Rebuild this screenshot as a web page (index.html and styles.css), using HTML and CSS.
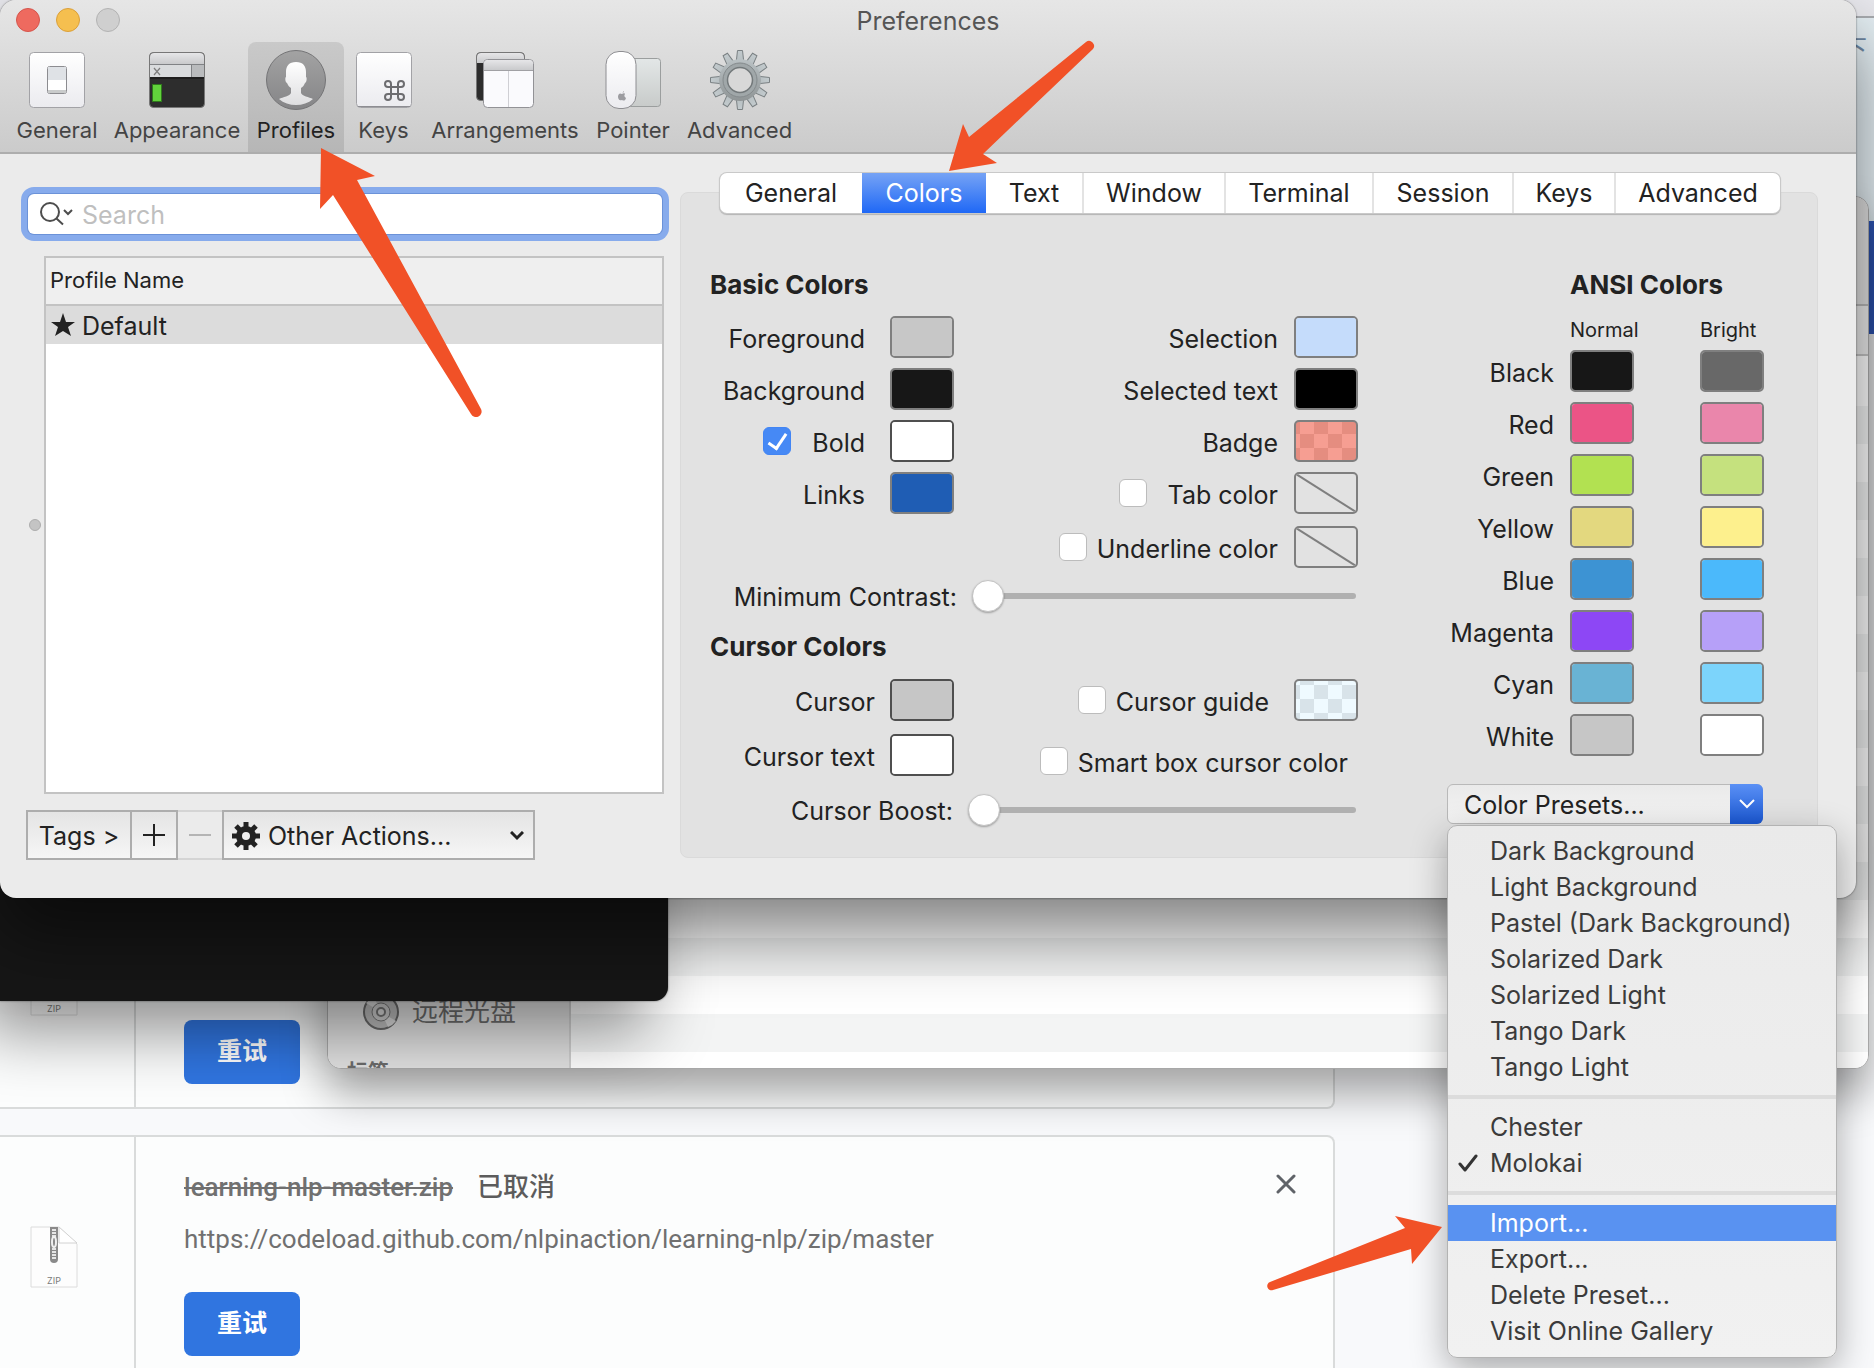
FILE: index.html
```html
<!DOCTYPE html>
<html lang="en">
<head>
<meta charset="utf-8">
<title>Preferences</title>
<link rel="stylesheet" href="styles.css">
</head>
<body>
<div class="desktop">

  <main class="browser" lang="zh-CN">
    <div class="browser-strip"></div>
    <div class="browser-header"><span class="header-link">下</span></div>
    <div class="browser-banner"></div>
    <div class="downloads">
      <article class="download">
        <div class="download-icon">
          <svg class="zip" viewBox="0 0 48 63" aria-hidden="true"><use href="#zip-file"/></svg>
        </div>
        <div class="download-body">
          <p class="download-name"><s>learning-nlp-master.zip</s> <span>已取消</span></p>
          <a class="download-url" href="#">https://codeload.github.com/nlpinaction/learning-nlp/zip/master</a>
          <button class="retry" type="button">重试</button>
        </div>
      </article>
      <article class="download">
        <div class="download-icon">
          <svg class="zip" viewBox="0 0 48 63" aria-hidden="true"><use href="#zip-file"/></svg>
        </div>
        <div class="download-body">
          <p class="download-name"><s>learning-nlp-master.zip</s> <span>已取消</span></p>
          <a class="download-url" href="#">https://codeload.github.com/nlpinaction/learning-nlp/zip/master</a>
          <button class="retry" type="button">重试</button>
        </div>
        <button class="close" type="button" aria-label="Remove">
          <svg viewBox="0 0 20 20" width="20" height="20"><path d="M2 2l16 16M18 2L2 18" stroke="#5f6368" stroke-width="3" stroke-linecap="round"/></svg>
        </button>
      </article>
    </div>
  </main>

  <section class="finder" aria-label="Finder" lang="zh-CN">
    <div class="finder-toolbar"></div>
    <div class="finder-path"></div>
    <div class="finder-main">
      <div class="finder-side">
        <div class="finder-place">
          <svg viewBox="0 0 38 38" width="38" height="38" aria-hidden="true">
            <circle cx="19" cy="19" r="17" fill="#bdbdbd" stroke="#6a6a6a" stroke-width="2"/>
            <path d="M19 19L4 10A17 17 0 0 1 12 4ZM19 19l15 9a17 17 0 0 1-8 6Z" fill="#dcdcdc"/>
            <circle cx="19" cy="19" r="9" fill="#cfcfcf" stroke="#777" stroke-width="1"/>
            <circle cx="19" cy="19" r="4" fill="#ddd" stroke="#777" stroke-width="2"/>
          </svg>
          <span>远程光盘</span>
        </div>
        <div class="finder-group">标签</div>
      </div>
      <div class="finder-list"></div>
    </div>
  </section>

  <section class="terminal" aria-label="Terminal"></section>

  <section class="prefs" aria-labelledby="prefs-title">
    <header class="prefs-head">
      <div class="titlebar">
        <div class="lights">
          <button class="light light-close" type="button" aria-label="Close"></button>
          <button class="light light-min" type="button" aria-label="Minimize"></button>
          <button class="light light-zoom" type="button" aria-label="Zoom" disabled></button>
        </div>
        <h1 class="prefs-title" id="prefs-title">Preferences</h1>
      </div>
      <nav class="toolbar">
        <button class="tool" type="button">
          <svg viewBox="0 0 60 60" aria-hidden="true">
            <rect x="2.500" y="2.500" width="55" height="55" rx="4" fill="url(#tile)" stroke="#a2a2a6"/>
            <rect x="20.500" y="16.500" width="19" height="27" rx="2" fill="#fff" stroke="#8c8c90"/>
            <rect x="21" y="17" width="18" height="13" fill="#dfe2e6"/>
            <rect x="21" y="40" width="18" height="3" fill="#c9cbcb"/>
          </svg>
          <span>General</span>
        </button>
        <button class="tool" type="button">
          <svg viewBox="0 0 60 60" aria-hidden="true">
            <rect x="2.500" y="2.500" width="55" height="55" rx="4" fill="#2d2d2d" stroke="#777"/>
            <path d="M3 14V7q0-4 4-4h46q4 0 4 4v7Z" fill="url(#bar)"/>
            <rect x="3" y="15" width="41" height="12" fill="#d9dbdd"/>
            <rect x="45" y="15" width="12" height="12" fill="#b9bbbd"/>
            <path d="M3 14.500h54M44.500 14v13" stroke="#808285"/>
            <path d="M3 28h54" stroke="#111"/>
            <path d="M7 18l6 7M13 18l-6 7" stroke="#7d7d7d" stroke-width="1.200"/>
            <rect x="5" y="34" width="10" height="18" fill="#2f7a1c"/>
            <rect x="6" y="35" width="8" height="16" fill="#62d23c"/>
          </svg>
          <span>Appearance</span>
        </button>
        <button class="tool tool-on" type="button" aria-current="page">
          <svg viewBox="0 0 60 60" aria-hidden="true">
            <circle cx="30" cy="30" r="29.500" fill="url(#disc)" stroke="#747476"/>
            <path d="M30 12c7 0 10 4 10 10v5c1 0 1 5-1 6-1 2-2 4-4 5v5c1 3 8 4 12 6-9 8-25 8-34 0 4-2 11-3 12-6v-5c-2-1-3-3-4-5-2-1-2-6-1-6v-5c0-6 3-10 10-10Z" fill="url(#person)"/>
          </svg>
          <span>Profiles</span>
        </button>
        <button class="tool" type="button">
          <svg viewBox="0 0 60 60" aria-hidden="true">
            <rect x="2.500" y="2.500" width="55" height="55" rx="4" fill="url(#tile)" stroke="#a2a2a6"/>
            <path d="M4 56.500h52" stroke="#8d8d92"/>
            <path d="M37 37h7v7h-7ZM37 37v-3a3 3 0 1 0-3 3ZM44 37h3a3 3 0 1 0-3-3ZM44 44v3a3 3 0 1 0 3-3ZM37 44h-3a3 3 0 1 0 3 3Z" fill="none" stroke="#6d6d70" stroke-width="2"/>
          </svg>
          <span>Keys</span>
        </button>
        <button class="tool" type="button">
          <svg viewBox="0 0 60 60" aria-hidden="true">
            <rect x="1.500" y="2.500" width="48" height="48" rx="4" fill="#2d2d2d" stroke="#777"/>
            <path d="M2 13V7q0-4 4-4h39q4 0 4 4v6Z" fill="url(#bar)"/>
            <rect x="8.500" y="9.500" width="50" height="48" rx="4" fill="#fafafd" stroke="#929296"/>
            <path d="M9 20v-6q0-4 4-4h41q4 0 4 4v6Z" fill="url(#bar)"/>
            <path d="M9 20.500h49" stroke="#a0a0a4"/>
            <path d="M33.500 21v36" stroke="#cfcfd4"/>
          </svg>
          <span>Arrangements</span>
        </button>
        <button class="tool" type="button">
          <svg viewBox="0 0 60 60" aria-hidden="true">
            <rect x="20.500" y="8.500" width="37" height="48" rx="3" fill="url(#pad)" stroke="#9b9e9e"/>
            <rect x="3" y="1.500" width="30" height="57" rx="13" fill="url(#tile)" stroke="#8e8e92"/>
            <path d="M19 43c1 0 1-2 2-2 0 1-1 2-2 2Zm0 1c1-1 3-1 3 0-1 1-1 3 1 4-1 3-2 3-4 2-3 1-4-1-4-4 1-3 2-3 4-2Z" fill="#9c9ca0"/>
          </svg>
          <span>Pointer</span>
        </button>
        <button class="tool" type="button">
          <svg viewBox="0 0 60 60" aria-hidden="true">
            <g fill="url(#steel)" stroke="#7a8083">
              <path d="M26 14L27.500 .500h5L34 14Z"/>
              <path d="M26 14L27.500 .500h5L34 14Z" transform="rotate(30 30 30)"/>
              <path d="M26 14L27.500 .500h5L34 14Z" transform="rotate(60 30 30)"/>
              <path d="M26 14L27.500 .500h5L34 14Z" transform="rotate(90 30 30)"/>
              <path d="M26 14L27.500 .500h5L34 14Z" transform="rotate(120 30 30)"/>
              <path d="M26 14L27.500 .500h5L34 14Z" transform="rotate(150 30 30)"/>
              <path d="M26 14L27.500 .500h5L34 14Z" transform="rotate(180 30 30)"/>
              <path d="M26 14L27.500 .500h5L34 14Z" transform="rotate(210 30 30)"/>
              <path d="M26 14L27.500 .500h5L34 14Z" transform="rotate(240 30 30)"/>
              <path d="M26 14L27.500 .500h5L34 14Z" transform="rotate(270 30 30)"/>
              <path d="M26 14L27.500 .500h5L34 14Z" transform="rotate(300 30 30)"/>
              <path d="M26 14L27.500 .500h5L34 14Z" transform="rotate(330 30 30)"/>
            </g>
            <circle cx="30" cy="30" r="21" fill="url(#steel)"/>
            <circle cx="30" cy="30" r="17" fill="#a0a7a9" stroke="#848a8c"/>
            <circle cx="30" cy="30" r="12.500" fill="#d8d8d8" stroke="#73797b" stroke-width="1.500"/>
          </svg>
          <span>Advanced</span>
        </button>
      </nav>
    </header>

    <div class="prefs-body">
      <aside class="profiles">
        <label class="search">
          <svg viewBox="0 0 34 24" width="34" height="24" aria-hidden="true">
            <circle cx="11" cy="10" r="9" fill="none" stroke="#4d4d4d" stroke-width="2"/>
            <path d="M17.500 16.500L24 22.500M25 8l4 4 4-4" fill="none" stroke="#4d4d4d" stroke-width="2"/>
          </svg>
          <input type="search" placeholder="Search" aria-label="Search profiles">
        </label>
        <div class="profile-area">
          <span class="grip"></span>
          <div class="profile-list">
            <table>
              <thead><tr><th scope="col">Profile Name</th></tr></thead>
              <tbody><tr><td>
                <svg viewBox="0 0 24 24" width="24" height="24" aria-hidden="true"><path d="M12 0l3 9h9l-7 5 3 9-8-5-8 5 3-9-7-5h9Z" fill="#222"/></svg>Default
              </td></tr></tbody>
            </table>
          </div>
        </div>
        <div class="profile-actions">
          <button class="act act-tags" type="button">Tags &gt;</button>
          <button class="act act-add" type="button" aria-label="Add profile"><svg viewBox="0 0 22 22" width="22" height="22"><path d="M11 0v22M0 11h22" stroke="#222" stroke-width="2"/></svg></button>
          <button class="act act-remove" type="button" aria-label="Remove profile" disabled><svg viewBox="0 0 22 22" width="22" height="22"><path d="M0 11h22" stroke="#b4b4b4" stroke-width="2"/></svg></button>
          <div class="act-other">
            <svg class="gear" viewBox="0 0 28 28" width="28" height="28" aria-hidden="true">
              <path d="M14 0v28M0 14h28M4 4l20 20M24 4L4 24" stroke="#222" stroke-width="5"/>
              <circle cx="14" cy="14" r="7" fill="none" stroke="#222" stroke-width="6"/>
              <circle cx="14" cy="14" r="4" fill="#eee"/>
            </svg>
            <select aria-label="Other actions"><option>Other Actions...</option></select>
            <svg class="chevron" viewBox="0 0 14 10" width="14" height="10" aria-hidden="true"><path d="M1 1l6 6 6-6" fill="none" stroke="#222" stroke-width="3"/></svg>
          </div>
        </div>
      </aside>

      <div class="pane">
        <div class="tabs" role="tablist">
          <button type="button" role="tab">General</button>
          <button type="button" role="tab" class="tab-on" aria-selected="true">Colors</button>
          <button type="button" role="tab">Text</button>
          <button type="button" role="tab">Window</button>
          <button type="button" role="tab">Terminal</button>
          <button type="button" role="tab">Session</button>
          <button type="button" role="tab">Keys</button>
          <button type="button" role="tab">Advanced</button>
        </div>

        <div class="panel">
          <div class="colors">
            <h2>Basic Colors</h2>
            <div class="basic">
              <div class="stack">
                <div class="field"><label for="fg">Foreground</label><input class="well" type="color" id="fg" value="#c7c7c7"></div>
                <div class="field"><label for="bg">Background</label><input class="well" type="color" id="bg" value="#171717"></div>
                <div class="field"><input class="tick tick-apart" type="checkbox" id="bold-on" checked aria-label="Use bold color"><label for="bold">Bold</label><input class="well well-dark" type="color" id="bold" value="#ffffff"></div>
                <div class="field"><label for="links">Links</label><input class="well" type="color" id="links" value="#1f5db4"></div>
              </div>
              <div class="stack stack-right">
                <div class="field"><label for="sel">Selection</label><input class="well" type="color" id="sel" value="#c5dcfb"></div>
                <div class="field"><label for="seltext">Selected text</label><input class="well" type="color" id="seltext" value="#000000"></div>
                <div class="field"><label for="badge">Badge</label><button class="well well-badge" type="button" id="badge"></button></div>
                <div class="field"><input class="tick tick-apart" type="checkbox" id="tab-on"><label for="tab-on">Tab color</label><button class="well well-none" type="button" aria-label="Tab color well"><svg viewBox="0 0 60 38" preserveAspectRatio="none"><path d="M0 0l60 38" stroke="#7f7f7f" stroke-width="2"/></svg></button></div>
                <div class="field field-tall"><input class="tick" type="checkbox" id="under-on"><label for="under-on">Underline color</label><button class="well well-none" type="button" aria-label="Underline color well"><svg viewBox="0 0 60 38" preserveAspectRatio="none"><path d="M0 0l60 38" stroke="#7f7f7f" stroke-width="2"/></svg></button></div>
              </div>
            </div>
            <div class="slide"><label for="contrast">Minimum Contrast:</label><input type="range" id="contrast" min="0" max="100" value="0"></div>

            <h2>Cursor Colors</h2>
            <div class="cursor-row">
              <div class="field field-near"><label for="cur">Cursor</label><input class="well well-dark" type="color" id="cur" value="#c6c6c6"></div>
              <div class="field"><input class="tick" type="checkbox" id="guide-on"><label for="guide-on">Cursor guide</label><button class="well well-guide" type="button" aria-label="Cursor guide color"></button></div>
            </div>
            <div class="cursor-row">
              <div class="field field-near"><label for="curtext">Cursor text</label><input class="well well-dark" type="color" id="curtext" value="#ffffff"></div>
              <div class="field field-smart"><input class="tick" type="checkbox" id="smart"><label for="smart">Smart box cursor color</label></div>
            </div>
            <div class="slide slide-boost"><label for="boost">Cursor Boost:</label><input type="range" id="boost" min="0" max="100" value="0"></div>
          </div>

          <div class="ansi">
            <table class="ansi-table">
              <thead>
                <tr><td></td><th colspan="2" class="ansi-title" scope="colgroup">ANSI Colors</th></tr>
                <tr class="ansi-heads"><td></td><th scope="col">Normal</th><th scope="col">Bright</th></tr>
              </thead>
              <tbody>
                <tr><th scope="row">Black</th><td><input class="well" type="color" aria-label="Black normal" value="#171717"></td><td><input class="well" type="color" aria-label="Black bright" value="#686868"></td></tr>
                <tr><th scope="row">Red</th><td><input class="well" type="color" aria-label="Red normal" value="#eb5486"></td><td><input class="well" type="color" aria-label="Red bright" value="#ea86ab"></td></tr>
                <tr><th scope="row">Green</th><td><input class="well" type="color" aria-label="Green normal" value="#b2e151"></td><td><input class="well" type="color" aria-label="Green bright" value="#c5e17e"></td></tr>
                <tr><th scope="row">Yellow</th><td><input class="well" type="color" aria-label="Yellow normal" value="#e3d87f"></td><td><input class="well" type="color" aria-label="Yellow bright" value="#fdf08d"></td></tr>
                <tr><th scope="row">Blue</th><td><input class="well" type="color" aria-label="Blue normal" value="#3d93d3"></td><td><input class="well" type="color" aria-label="Blue bright" value="#4bb9fb"></td></tr>
                <tr><th scope="row">Magenta</th><td><input class="well" type="color" aria-label="Magenta normal" value="#8d47f5"></td><td><input class="well" type="color" aria-label="Magenta bright" value="#b6a0f8"></td></tr>
                <tr><th scope="row">Cyan</th><td><input class="well" type="color" aria-label="Cyan normal" value="#69b3d4"></td><td><input class="well" type="color" aria-label="Cyan bright" value="#7cd4fb"></td></tr>
                <tr><th scope="row">White</th><td><input class="well" type="color" aria-label="White normal" value="#c6c6c6"></td><td><input class="well" type="color" aria-label="White bright" value="#ffffff"></td></tr>
              </tbody>
            </table>
            <div class="presets">
              <select class="presets-select" aria-label="Color presets"><option>Color Presets...</option></select>
              <span class="presets-arrow"><svg viewBox="0 0 16 10" width="16" height="10" aria-hidden="true"><path d="M1 1l7 7 7-7" fill="none" stroke="#fff" stroke-width="2"/></svg></span>
              <div class="menu" role="menu">
                <button type="button" role="menuitem">Dark Background</button>
                <button type="button" role="menuitem">Light Background</button>
                <button type="button" role="menuitem">Pastel (Dark Background)</button>
                <button type="button" role="menuitem">Solarized Dark</button>
                <button type="button" role="menuitem">Solarized Light</button>
                <button type="button" role="menuitem">Tango Dark</button>
                <button type="button" role="menuitem">Tango Light</button>
                <hr>
                <button type="button" role="menuitem">Chester</button>
                <button type="button" role="menuitem" class="menu-checked"><svg viewBox="0 0 20 18" width="20" height="18" aria-hidden="true"><path d="M2 10l5 6L18 2" fill="none" stroke="#333" stroke-width="3" stroke-linecap="round" stroke-linejoin="round"/></svg>Molokai</button>
                <hr>
                <button type="button" role="menuitem" class="menu-on">Import...</button>
                <button type="button" role="menuitem">Export...</button>
                <button type="button" role="menuitem">Delete Preset...</button>
                <button type="button" role="menuitem">Visit Online Gallery</button>
              </div>
            </div>
          </div>
        </div>
      </div>
    </div>
  </section>

  <svg class="arrows" viewBox="0 0 1874 1368" width="1874" height="1368" aria-hidden="true">
    <g fill="#f15127">
      <path d="M321 148l54 28-18 4 124 229a5 5 0 0 1-10 5L333 195l-13 14Z"/>
      <path d="M949 171l14-47 6 13L1086 42a5 5 0 0 1 7 7L983 154l14 9Z"/>
      <path d="M1442 1227l-47-11 10 12-135 54a4 4 0 0 0 3 8l138-41 1 15Z"/>
    </g>
  </svg>
</div>

<svg class="defs" width="0" height="0" aria-hidden="true">
  <defs>
    <linearGradient id="tile" x2="0" y2="1"><stop stop-color="#fff"/><stop offset="1" stop-color="#ebebef"/></linearGradient>
    <linearGradient id="bar" x2="0" y2="1"><stop stop-color="#e6e6e8"/><stop offset="1" stop-color="#c9cacc"/></linearGradient>
    <linearGradient id="disc" x2="0" y2="1"><stop stop-color="#a3a3a3"/><stop offset="1" stop-color="#858587"/></linearGradient>
    <linearGradient id="person" x2="0" y2="1"><stop stop-color="#fff"/><stop offset="1" stop-color="#dedee0"/></linearGradient>
    <linearGradient id="pad" x2="0" y2="1"><stop stop-color="#e3e7e7"/><stop offset="1" stop-color="#c8cbca"/></linearGradient>
    <linearGradient id="steel" gradientUnits="userSpaceOnUse" x1="0" x2="0" y1="0" y2="60"><stop stop-color="#c3cbce"/><stop offset="1" stop-color="#868b8c"/></linearGradient>
    <symbol id="zip-file" viewBox="0 0 48 63">
      <path d="M1 1h28l18 17v43H1Z" fill="#fdfdfd" stroke="#dcdcdc"/>
      <path d="M29 1v16h18Z" fill="#fff" stroke="#d2d2d2"/>
      <path d="M20 1h8v32q0 4-4 4t-4-4Z" fill="#8a8a8a"/>
      <path d="M24 3v8M24 22v12" stroke="#e6e6e6" stroke-width="4" stroke-dasharray="2 1"/>
      <ellipse cx="24" cy="16" rx="2" ry="5" fill="none" stroke="#f0f0f0" stroke-width="2"/>
      <text x="24" y="58" text-anchor="middle" font-family="Inter, sans-serif" font-size="9" fill="#7a7a7a">ZIP</text>
    </symbol>
  </defs>
</svg>
</body>
</html>
```

FILE: styles.css
```css
* {
  box-sizing: border-box;
}

body {
  margin: 0;
  font-family: Inter, "Noto Sans CJK SC", sans-serif;
  font-size: 25px;
  line-height: 36px;
  color: #222;
}

h1, h2, p {
  margin: 0;
}

button, input, select {
  margin: 0;
  padding: 0;
  border: 0;
  background: none;
  color: inherit;
  font: inherit;
}

.desktop {
  position: relative;
  height: 100vh;
  overflow: hidden;
  background: #f8f9fb;
}

.defs {
  position: absolute;
}

/* Browser window at the back */

.browser-strip {
  height: 18px;
  border-bottom: 2px solid #a9acb0;
  background: #e9e9ee;
}

.browser-header {
  display: flex;
  justify-content: flex-end;
  height: 203px;
  padding: 13px 7px;
  background: #e6f0f5;
}

.header-link {
  color: #6f88a4;
}

.browser-banner {
  height: 113px;
  background: #3059bd;
}

.downloads {
  display: flex;
  flex-direction: column;
  gap: 26px;
  margin-top: 529px;
  padding-right: 539px;
}

.download {
  display: flex;
  flex: none;
  position: relative;
  height: 246px;
  border: 2px solid #d9dbdb;
  border-left: 0;
  border-radius: 0 8px 8px 0;
  background: #fcfdfd;
}

.download-icon {
  flex: none;
  width: 136px;
  padding: 89px 0 0 30px;
  border-right: 2px solid #d9dbdb;
}

.zip {
  display: block;
  width: 48px;
  height: 63px;
}

.download-body {
  display: flex;
  flex-direction: column;
  align-items: flex-start;
  padding: 32px 48px 0;
  font-family: Roboto, "Noto Sans CJK SC", sans-serif;
  font-size: 26px;
  color: #707070;
}

.download-name {
  display: flex;
  gap: 24px;
  font-weight: 500;
}

.download-name span {
  color: #5c5c5c;
}

.download-url {
  margin: 16px 0 35px;
  color: inherit;
  text-decoration: none;
}

.retry {
  flex: none;
  width: 116px;
  height: 64px;
  border-radius: 8px;
  background: #3075e0;
  color: #fff;
  font-size: 25px;
  font-weight: 700;
}

.close {
  position: absolute;
  top: 37px;
  right: 37px;
  width: 20px;
  height: 20px;
  line-height: 0;
}

/* Finder window */

.finder {
  position: absolute;
  top: 196px;
  left: 327px;
  right: 5px;
  display: flex;
  flex-direction: column;
  height: 873px;
  overflow: hidden;
  border: 1px solid #a8a8a8;
  border-radius: 14px;
  background: #fff;
  box-shadow: 0 24px 44px rgba(0, 0, 0, .36);
}

.finder-toolbar {
  flex: none;
  height: 109px;
  border-bottom: 2px solid #b8b8b8;
  background: #e0e0e0;
}

.finder-path {
  flex: none;
  height: 50px;
  border-bottom: 2px solid #c4c4c4;
  background: #ececec;
}

.finder-main {
  display: flex;
  flex: 1;
}

.finder-side {
  flex: none;
  display: flex;
  flex-direction: column;
  justify-content: flex-end;
  width: 243px;
  height: 712px;
  border-right: 2px solid #cfcfcf;
  background: #e2e2e2;
  color: #6c6c6c;
}

.finder-place {
  display: flex;
  align-items: center;
  gap: 12px;
  padding-left: 34px;
  font-size: 26px;
}

.finder-group {
  height: 10px;
  margin: 27px 0 0 19px;
  overflow: hidden;
  font-size: 21px;
  line-height: 28px;
  font-weight: 700;
}

.finder-list {
  flex: 1;
  margin-top: 50px;
  background: repeating-linear-gradient(#f3f4f4 0 38px, #fff 38px 76px);
}

/* Terminal window */

.terminal {
  position: absolute;
  top: 500px;
  left: 0;
  width: 668px;
  height: 501px;
  border-radius: 0 0 14px 0;
  background: #161616;
  box-shadow: 0 0 2px rgba(0, 0, 0, .6), -20px 32px 64px rgba(0, 0, 0, .42);
}

/* Preferences window */

.prefs {
  position: absolute;
  top: 0;
  left: 0;
  right: 18px;
  border-radius: 16px;
  background: #ebebeb;
  box-shadow: 0 0 2px rgba(0, 0, 0, .6), 0 36px 70px rgba(0, 0, 0, .5);
}

.prefs-head {
  height: 154px;
  border-bottom: 2px solid #adadad;
  border-radius: 16px 16px 0 0;
  background: linear-gradient(#e6e6e6, #cbcbcb);
}

.titlebar {
  display: grid;
  grid-template-columns: 1fr auto 1fr;
  align-items: center;
  height: 42px;
  padding: 0 16px;
}

.lights {
  display: flex;
  gap: 16px;
}

.light {
  width: 24px;
  height: 24px;
  margin-bottom: 2px;
  border: 1px solid #d5554c;
  border-radius: 50%;
  background: #ee6a5f;
}

.light-min {
  border-color: #dba03a;
  background: #f5bf4f;
}

.light-zoom {
  border-color: #b3b3b3;
  background: #cfcfcf;
}

.prefs-title {
  font-size: 25px;
  font-weight: 400;
  color: #555;
}

.toolbar {
  display: grid;
  grid-template-columns: 98px 142px 96px 79px 164px 92px 121px;
  padding-left: 8px;
}

.tool {
  display: flex;
  flex-direction: column;
  align-items: center;
  height: 110px;
  padding-top: 8px;
  border-radius: 8px 8px 0 0;
  font-size: 22px;
  line-height: 40px;
  color: #444;
}

.tool svg {
  width: 60px;
  height: 60px;
}

.tool-on {
  background: linear-gradient(#c9c9c9, #b6b6b6);
  color: #222;
}

.prefs-body {
  display: flex;
}

/* Profile list */

.profiles {
  display: flex;
  flex: none;
  flex-direction: column;
  width: 664px;
  padding: 40px 0 38px 28px;
}

.search {
  display: flex;
  align-items: center;
  height: 40px;
  margin-right: 2px;
  padding-left: 11px;
  border-radius: 6px;
  background: #fff;
  box-shadow: 0 0 0 1px #6b92d8, 0 0 0 7px #87abec;
}

.search input {
  flex: 1;
  margin-left: 9px;
  padding-top: 2px;
  outline: 0;
  appearance: none;
}

.search input::placeholder {
  color: #bfbfbf;
}

.profile-area {
  display: flex;
  flex: 1;
  align-items: center;
  margin: 22px 0 16px;
}

.grip {
  flex: none;
  width: 12px;
  height: 12px;
  margin: 0 3px 0 1px;
  border: 1px solid #adadad;
  border-radius: 50%;
  background: #c4c4c4;
}

.profile-list {
  flex: 1;
  align-self: stretch;
  border: 2px solid #c3c3c3;
  background: #fff;
}

.profile-list table {
  width: 100%;
  border-spacing: 0;
}

.profile-list th {
  height: 48px;
  padding: 0 4px 2px;
  border-bottom: 2px solid #c3c3c3;
  background: #efefef;
  font-size: 22px;
  font-weight: 400;
  text-align: left;
}

.profile-list td {
  height: 38px;
  padding: 2px 5px 0;
  background: #dcdcdc;
}

.profile-list td svg {
  margin-right: 7px;
  vertical-align: -2px;
}

.profile-actions {
  display: flex;
  height: 50px;
  margin-left: -2px;
}

.act {
  padding-top: 2px;
  border: 2px solid #adadad;
  background: linear-gradient(#e4e4e4, #f6f6f6);
}

.act-tags {
  width: 106px;
}

.act-add {
  width: 46px;
  padding: 0;
  border-left: 0;
  line-height: 0;
}

.act-remove {
  width: 44px;
  padding: 0;
  border-color: #d4d4d4;
  border-right: 0;
  border-left: 0;
  background: #ebebeb;
  line-height: 0;
}

.act-other {
  position: relative;
  width: 313px;
}

.act-other select {
  width: 100%;
  height: 50px;
  padding: 2px 0 0 44px;
  border: 2px solid #adadad;
  appearance: none;
  background: linear-gradient(#e4e4e4, #f6f6f6);
}

.gear {
  position: absolute;
  top: 12px;
  left: 10px;
}

.chevron {
  position: absolute;
  top: 21px;
  right: 11px;
}

/* Tabs and panel */

.pane {
  display: flex;
  flex: 1;
  flex-direction: column;
  align-items: center;
  margin-left: 16px;
  padding: 19px 38px 40px 0;
}

.tabs {
  position: relative;
  z-index: 1;
  display: grid;
  grid-template-columns: 142px 124px 98px 142px 148px 140px 102px 164px;
  height: 40px;
  margin: 0 0 -21px 2px;
  border-radius: 7px;
  background: #fff;
  box-shadow: 0 0 0 1px #c9c9c9, 0 1px 1px 1px #b4b4b4;
}

.tabs button {
  border-right: 2px solid #e3e3e3;
}

.tabs button:first-child,
.tabs button:last-child {
  border-right: 0;
}

.tabs .tab-on {
  border-right: 0;
  background: linear-gradient(#76a3f5, #1f68f6);
  color: #fff;
}

.panel {
  display: flex;
  justify-content: space-between;
  align-self: stretch;
  padding: 67px 53px 19px 29px;
  border: 1px solid #dadada;
  border-radius: 8px;
  background: #e2e2e2;
}

.colors {
  width: 648px;
}

h2 {
  font-size: 26px;
  line-height: 50px;
  font-weight: 700;
}

.basic {
  display: flex;
  justify-content: space-between;
  padding-top: 6px;
}

.stack {
  display: flex;
  flex-direction: column;
  gap: 10px;
  width: 244px;
}

.stack-right {
  width: 320px;
}

.field {
  display: flex;
  align-items: center;
  justify-content: flex-end;
  height: 42px;
}

.field label {
  padding-top: 4px;
}

.field .well {
  margin-left: 25px;
}

.stack-right .well {
  margin-left: 16px;
}

.field-tall {
  height: 46px;
}

.well {
  display: block;
  flex: none;
  width: 64px;
  height: 42px;
  overflow: hidden;
  border: 2px solid #7f7f7f;
  border-radius: 5px;
  appearance: none;
}

.well::-webkit-color-swatch-wrapper {
  padding: 0;
}

.well::-webkit-color-swatch {
  border: 0;
}

.well-dark {
  border-color: #4f4f4f;
}

.well-badge {
  background: conic-gradient(#e58d80 25%, #f69e92 0 50%, #e58d80 0 75%, #f69e92 0) 4px -2px / 28px 28px;
}

.well-guide {
  background: conic-gradient(#d8e3e9 25%, #effaff 0 50%, #d8e3e9 0 75%, #effaff 0) 4px 4px / 28px 28px;
}

.well-none svg {
  display: block;
  width: 60px;
  height: 38px;
}

.tick {
  flex: none;
  width: 28px;
  height: 28px;
  margin-right: 10px;
  border: 1px solid #bcbcbc;
  border-radius: 6px;
  appearance: none;
  background: #fff;
}

.tick-apart {
  margin-right: 21px;
}

.tick:checked {
  display: grid;
  place-items: center;
  border-color: #4285f4;
  background: #4689f5;
}

.tick:checked::before {
  width: 8px;
  height: 16px;
  margin-bottom: 4px;
  border: solid #fff;
  border-width: 0 3px 3px 0;
  content: "";
  transform: rotate(34deg);
}

.slide {
  display: flex;
  align-items: center;
  height: 52px;
}

.slide label {
  width: 247px;
  padding-top: 2px;
  text-align: right;
  white-space: nowrap;
}

.slide input {
  flex: 1;
  height: 32px;
  margin: 0 2px 0 15px;
  appearance: none;
}

.slide-boost {
  height: 56px;
}

.slide-boost label {
  width: 243px;
}

.slide input::-webkit-slider-runnable-track {
  height: 6px;
  border-radius: 3px;
  background: #b0b0b0;
}

.slide input::-webkit-slider-thumb {
  width: 32px;
  height: 32px;
  margin-top: -13px;
  border: 1px solid #c4c4c4;
  border-radius: 50%;
  appearance: none;
  background: #fff;
  box-shadow: 0 1px 2px rgba(0, 0, 0, .3);
}

.cursor-row {
  display: flex;
  align-items: center;
  justify-content: space-between;
  height: 55px;
}

.field-near {
  width: 244px;
}

.field-near .well {
  margin-left: 15px;
}

.field-smart {
  align-self: flex-end;
  padding-right: 10px;
}

/* ANSI table */

.ansi {
  flex: none;
  width: 317px;
}

.ansi-table {
  width: 100%;
  margin-top: -2px;
  border-collapse: collapse;
}

.ansi-table th,
.ansi-table td {
  height: 52px;
  padding: 0 0 10px;
  font-weight: 400;
  text-align: left;
}

.ansi-table tbody th {
  width: 123px;
  padding: 3px 16px 10px 0;
  text-align: right;
}

.ansi-table td:nth-child(2) {
  width: 130px;
}

.ansi-table thead .ansi-title {
  height: 52px;
  padding: 2px 0 0;
  font-size: 26px;
  font-weight: 700;
}

.ansi-table .ansi-heads th,
.ansi-table .ansi-heads td {
  height: 40px;
  padding: 0;
  font-size: 20px;
}

.presets {
  position: relative;
  height: 40px;
  margin: 18px 1px 0 0;
}

.presets-select {
  display: block;
  width: 100%;
  height: 40px;
  padding: 2px 0 0 16px;
  border: 1px solid #b9b9b9;
  border-radius: 6px;
  appearance: none;
  background: linear-gradient(#eaeaea, #f4f4f4);
}

.presets-arrow {
  position: absolute;
  top: 0;
  right: 0;
  display: grid;
  place-items: center;
  width: 33px;
  height: 40px;
  border-radius: 0 6px 6px 0;
  background: linear-gradient(#5a90f5, #1a57d2);
  pointer-events: none;
}

.menu {
  position: absolute;
  z-index: 2;
  top: 41px;
  left: 0;
  display: flex;
  flex-direction: column;
  width: 390px;
  padding: 7px 0 8px;
  border: 1px solid #b3b3b3;
  border-radius: 10px;
  background: linear-gradient(#eaeaea, #f1f1f1);
  box-shadow: 0 12px 36px rgba(0, 0, 0, .32);
}

.menu button {
  flex: none;
  position: relative;
  height: 36px;
  padding-left: 42px;
  color: #3b3b3b;
  text-align: left;
}

.menu hr {
  width: 100%;
  height: 4px;
  margin: 10px 0;
  border: 0;
  background: #dcdcdc;
}

.menu .menu-on {
  background: #5992f1;
  color: #fff;
}

.menu-checked svg {
  position: absolute;
  top: 9px;
  left: 10px;
}

/* Hand-drawn pointers over everything */

.arrows {
  position: absolute;
  z-index: 5;
  top: 0;
  left: 0;
  pointer-events: none;
}
```
